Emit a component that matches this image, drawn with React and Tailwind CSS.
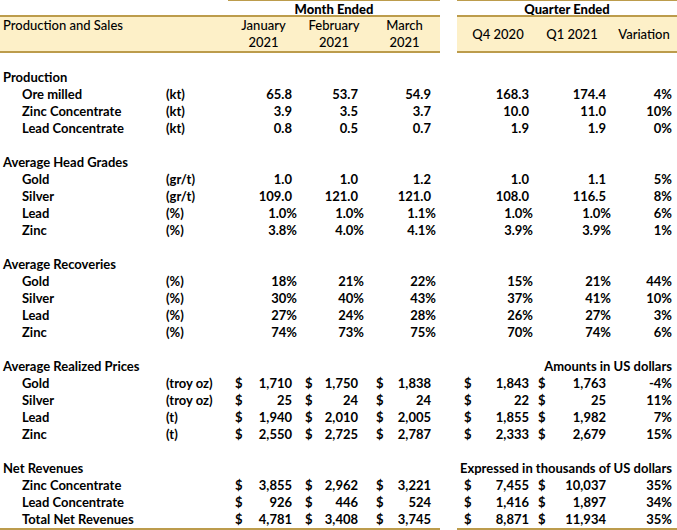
import React from "react";

const line = "border-[#bc9c4c]";
const fill = "bg-[#fdf0c8]";

// value columns: width, left pad for the "$", right pad for numbers and for percents
const monthCols = [
  { w: "w-[71px]", sign: "pl-[7px]", num: "pr-[7px]", pct: "pr-[2px]" },
  { w: "w-[70px]", sign: "pl-[6px]", num: "pr-[11px]", pct: "pr-[5px]" },
  { w: "w-[71px]", sign: "pl-[7px]", num: "pr-[9px]", pct: "pr-[4px]" },
];
const quarterCols = [
  { w: "w-[76px]", sign: "pl-[7px]", num: "pr-[4px]", pct: "pr-[0px]" },
  { w: "w-[78px]", sign: "pl-[5px]", num: "pr-[5px]", pct: "pr-[0px]" },
  { w: "w-[66px]", sign: "pl-[0px]", num: "pr-[5px]", pct: "pr-[5px]" },
];

const sections = [
  {
    title: "Production",
    rows: [
      ["Ore milled", "(kt)", "65.8", "53.7", "54.9", "168.3", "174.4", "4%"],
      ["Zinc Concentrate", "(kt)", "3.9", "3.5", "3.7", "10.0", "11.0", "10%"],
      ["Lead Concentrate", "(kt)", "0.8", "0.5", "0.7", "1.9", "1.9", "0%"],
    ],
  },
  {
    title: "Average Head Grades",
    rows: [
      ["Gold", "(gr/t)", "1.0", "1.0", "1.2", "1.0", "1.1", "5%"],
      ["Silver", "(gr/t)", "109.0", "121.0", "121.0", "108.0", "116.5", "8%"],
      ["Lead", "(%)", "1.0%", "1.0%", "1.1%", "1.0%", "1.0%", "6%"],
      ["Zinc", "(%)", "3.8%", "4.0%", "4.1%", "3.9%", "3.9%", "1%"],
    ],
  },
  {
    title: "Average Recoveries",
    rows: [
      ["Gold", "(%)", "18%", "21%", "22%", "15%", "21%", "44%"],
      ["Silver", "(%)", "30%", "40%", "43%", "37%", "41%", "10%"],
      ["Lead", "(%)", "27%", "24%", "28%", "26%", "27%", "3%"],
      ["Zinc", "(%)", "74%", "73%", "75%", "70%", "74%", "6%"],
    ],
  },
  {
    title: "Average Realized Prices",
    note: "Amounts in US dollars",
    money: true,
    rows: [
      ["Gold", "(troy oz)", "1,710", "1,750", "1,838", "1,843", "1,763", "-4%"],
      ["Silver", "(troy oz)", "25", "24", "24", "22", "25", "11%"],
      ["Lead", "(t)", "1,940", "2,010", "2,005", "1,855", "1,982", "7%"],
      ["Zinc", "(t)", "2,550", "2,725", "2,787", "2,333", "2,679", "15%"],
    ],
  },
  {
    title: "Net Revenues",
    note: "Expressed in thousands of US dollars",
    money: true,
    rows: [
      ["Zinc Concentrate", "", "3,855", "2,962", "3,221", "7,455", "10,037", "35%"],
      ["Lead Concentrate", "", "926", "446", "524", "1,416", "1,897", "34%"],
      ["Total Net Revenues", "", "4,781", "3,408", "3,745", "8,871", "11,934", "35%"],
    ],
  },
];

function Cell({ col, value, money }) {
  const pct = value.endsWith("%");
  return (
    <div className={`${col.w} flex justify-between`}>
      <span className={col.sign}>{money ? "$" : ""}</span>
      <span className={pct ? col.pct : col.num}>{value}</span>
    </div>
  );
}

function DataRow({ row, money, last }) {
  const [label, unit, ...vals] = row;
  const edge = last ? `border-b-2 ${line}` : "";
  return (
    <div className={`flex font-bold ${last ? "h-[19px]" : "h-[17px]"}`}>
      <div className={`w-[440px] flex ${edge}`}>
        <div className="w-[160px] pl-[22px]">{label}</div>
        <div className="w-[68px] pl-[6px]">{unit}</div>
        {monthCols.map((c, i) => (
          <Cell key={i} col={c} value={vals[i]} money={money} />
        ))}
      </div>
      <div className="w-[17px]" />
      <div className={`w-[220px] flex ${edge}`}>
        {quarterCols.map((c, i) => (
          <Cell key={i} col={c} value={vals[i + 3]} money={money && i < 2} />
        ))}
      </div>
    </div>
  );
}

export default function App() {
  return (
    <div className="w-[677px] h-[530px] overflow-hidden bg-white text-black text-[13px] leading-[17px] font-['Lato',sans-serif]">
      {/* column group titles */}
      <div className="flex h-[15px] leading-[16px] font-black">
        <div className="w-[228px]" />
        <div className={`w-[212px] border-t ${line} text-center`}>Month Ended</div>
        <div className="w-[17px]" />
        <div className={`w-[220px] border-t ${line} text-center`}>Quarter Ended</div>
      </div>

      {/* column headers */}
      <div className="flex font-medium">
        <div className={`w-[440px] flex ${fill} border-y-2 ${line}`}>
          <div className="w-[228px] pl-[3px]">Production and Sales</div>
          {["January", "February", "March"].map((m, i) => (
            <div key={m} className={`${monthCols[i].w} text-center`}>
              <div>{m}</div>
              <div>2021</div>
            </div>
          ))}
        </div>
        <div className="w-[17px]" />
        <div className={`w-[220px] flex items-center ${fill} border-y-2 ${line}`}>
          <div className="w-[76px] pl-[6px] text-center">Q4 2020</div>
          <div className="w-[78px] text-center">Q1 2021</div>
          <div className="w-[66px] text-center">Variation</div>
        </div>
      </div>

      <div className="h-[16px]" />

      {sections.map((s, si) => (
        <div key={s.title}>
          <div className="flex justify-between h-[17px] font-bold">
            <div className="pl-[3px]">{s.title}</div>
            {s.note && <div className="pr-[5px]">{s.note}</div>}
          </div>
          {s.rows.map((r, ri) => (
            <DataRow
              key={ri}
              row={r}
              money={s.money}
              last={si === sections.length - 1 && ri === s.rows.length - 1}
            />
          ))}
          {si < sections.length - 1 && <div className="h-[17px]" />}
        </div>
      ))}
    </div>
  );
}
